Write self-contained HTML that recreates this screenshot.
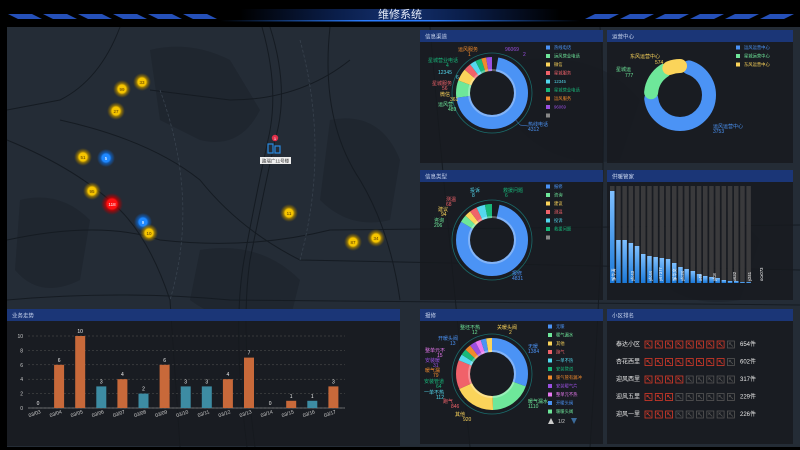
<!DOCTYPE html>
<html><head><meta charset="utf-8"><style>
html,body{margin:0;padding:0;background:#000;width:800px;height:450px;overflow:hidden}
svg text{font-family:"Liberation Sans","Noto Sans CJK SC",sans-serif}
</style></head><body>
<svg id="s" width="800" height="450" viewBox="0 0 800 450" xmlns="http://www.w3.org/2000/svg">
<defs>
<linearGradient id="tb" x1="0" x2="1"><stop offset="0" stop-color="#000"/><stop offset="0.3" stop-color="#0a1e4a"/><stop offset="0.5" stop-color="#14306e"/><stop offset="0.7" stop-color="#0a1e4a"/><stop offset="1" stop-color="#000"/></linearGradient>
<linearGradient id="tl" x1="0" x2="1"><stop offset="0" stop-color="#000"/><stop offset="0.4" stop-color="#2a7cff"/><stop offset="0.6" stop-color="#2a7cff"/><stop offset="1" stop-color="#000"/></linearGradient>
<linearGradient id="bb" x1="0" y1="0" x2="0" y2="1"><stop offset="0" stop-color="#7fc0ff"/><stop offset="1" stop-color="#1a78d8"/></linearGradient>
<radialGradient id="gy"><stop offset="0.45" stop-color="#f5c400"/><stop offset="0.6" stop-color="#b08a00" stop-opacity="0.8"/><stop offset="1" stop-color="#806000" stop-opacity="0"/></radialGradient>
<radialGradient id="gb"><stop offset="0.45" stop-color="#1e88ff"/><stop offset="0.6" stop-color="#1060c0" stop-opacity="0.8"/><stop offset="1" stop-color="#1060c0" stop-opacity="0"/></radialGradient>
<radialGradient id="gr"><stop offset="0.45" stop-color="#ff1010"/><stop offset="0.6" stop-color="#c00000" stop-opacity="0.8"/><stop offset="1" stop-color="#a00000" stop-opacity="0"/></radialGradient>
</defs>
<rect width="800" height="450" fill="#000"/>
<rect x="7" y="27" width="793" height="420" fill="#242c36"/>
<g fill="#1f262f" opacity="0.9">
<path d="M150 50 Q190 40 230 60 L260 110 Q240 150 200 140 L160 120Z"/>
<path d="M20 200 Q60 190 90 220 L80 280 Q40 300 15 270Z"/>
<path d="M330 120 Q380 110 400 160 L390 220 Q350 230 320 200Z"/>
<path d="M200 250 Q260 240 300 280 L290 320 Q230 330 190 300Z"/>
<path d="M520 60 Q600 50 640 100 L620 160 Q560 170 520 130Z"/>
<path d="M650 200 Q720 190 760 240 L740 300 Q680 310 650 270Z"/>
</g>
<g fill="none" stroke="#151b22" stroke-width="1">
<path d="M270 27 Q290 90 275 140 Q262 200 250 260 Q240 330 255 447"/>
<path d="M262 27 Q280 90 268 140 Q255 200 244 260 Q232 330 247 447"/>
<path d="M7 240 Q100 220 160 240 Q250 250 330 230 L800 225"/>
<path d="M60 120 Q150 140 200 180 Q240 230 300 260 L800 270"/>
<path d="M7 140 Q80 170 120 210 Q150 240 170 300 L180 447"/>
<path d="M330 27 Q320 120 360 180 Q390 230 400 300"/>
<path d="M7 300 Q120 290 230 300 L800 305"/>
<path d="M120 27 Q100 80 60 100 L7 110"/>
<path d="M350 60 Q300 100 230 100 L150 90"/>
<path d="M600 27 Q610 150 590 447"/>
<path d="M430 27 Q440 150 470 447"/>
</g>
<g fill="none" stroke="#38424e" stroke-width="0.8" stroke-dasharray="3 2">
<path d="M160 90 Q200 200 170 300"/><path d="M300 40 Q330 150 300 260"/>
</g>
<rect x="0" y="0" width="800" height="26" fill="#000"/>
<rect x="240" y="9" width="320" height="12" fill="url(#tb)"/>
<rect x="220" y="20" width="360" height="1.5" fill="url(#tl)"/>
<g fill="#2550b8" id="stripes"></g>
<text x="400" y="18" fill="#e8eefa" font-size="11" text-anchor="middle">维修系统</text>
<g id="dyn"></g>
</svg>
<script>
const NS="http://www.w3.org/2000/svg";
const S=document.getElementById('dyn');
function el(t,a,txt,par){const e=document.createElementNS(NS,t);for(const k in a)e.setAttribute(k,a[k]);if(txt!=null)e.textContent=txt;(par||S).appendChild(e);return e;}
function tx(x,y,s,c,fs,anc){return el('text',{x:x,y:y,fill:c,'font-size':fs||5,'text-anchor':anc||'start'},s);}
const st=document.getElementById('stripes');
for(let i=0;i<6;i++){let x=8+i*35;el('polygon',{points:`${x},14 ${x+24},14 ${x+34},19 ${x+10},19`},null,st);}
for(let i=0;i<6;i++){let x=585+i*35;el('polygon',{points:`${x+10},14 ${x+34},14 ${x+24},19 ${x},19`},null,st);}
function panel(x,y,w,h,title){el('rect',{x:x,y:y,width:w,height:h,fill:'#16191e','fill-opacity':0.8});el('rect',{x:x,y:y,width:w,height:12,fill:'#1b3677'});tx(x+5,y+8.5,title,'#c8d4ee',5.5);}
panel(420,30,183,133,'信息渠道');panel(607,30,186,133,'运营中心');
panel(420,170,183,130,'信息类型');panel(607,170,186,130,'供暖管家');
panel(420,309,183,135,'报修');panel(607,309,186,135,'小区排名');
panel(7,309,393,137,'业务走势');
function donut(cx,cy,r,w,segs,gap){const C=2*Math.PI*r;for(const [a1,a2,c] of segs){const L=(a2-a1-(gap||0))/360*C;el('circle',{cx:cx,cy:cy,r:r,fill:'none',stroke:c,'stroke-width':w,'stroke-dasharray':`${L} ${C}`,'stroke-dashoffset':-a1/360*C,transform:`rotate(-90 ${cx} ${cy})`,'stroke-linecap':gap?'round':'butt'});}}
const B='#4b93f5',G='#6ee79a',Y='#fbd45a',R='#f0626a',CY='#54d8ee',T='#18b87a',O='#f08a2c',P='#9a4fe0',PK='#e878f0';
el('circle',{cx:492,cy:93,r:40,fill:'none',stroke:'#1a6a6a','stroke-width':0.8});
donut(492,93,29,14,[[10,262,B],[262,290,G],[290,310,Y],[310,322,R],[322,332,CY],[332,342,T],[342,350,O],[350,360,P]]);
el('circle',{cx:492,cy:93,r:23,fill:'none',stroke:'#fff','stroke-opacity':0.3,'stroke-width':2});
const l1=[[458,51,'运风服务','1',O],[505,51,'96069','2',P],[428,62,'星城营业电话','4',T],[438,74,'12345','6',CY],[432,85,'星城服务','56',R],[440,96,'微信','361',Y],[438,106,'运风营','489',G]];
for(const [x,y,a,b,c] of l1){tx(x,y,a,c,5);tx(x+ (a.length>4?18:10),y+5,b,c,5);}
tx(528,126,'热线电话',B,5);tx(528,131,'4312',B,5);
el('path',{d:'M514 118 L520 125 L528 126',stroke:B,fill:'none','stroke-width':0.5});
function legend(x,y,items){items.forEach((it,i)=>{el('rect',{x:x,y:y+i*8.5-3.5,width:4,height:4,fill:it[1]});tx(x+8,y+i*8.5,it[0],it[1],4.3);});}
legend(546,49,[['热线电话',B],['运风营业电话',G],['微信',Y],['星城服务',R],['12345',CY],['星城营业电话',T],['运风服务',O],['96069',P],['',"#888"]]);
donut(680,95,29,14,[[18,268,B,],[275,332,G],[338,12,Y]].map(s=>s[1]<s[0]?[s[0],s[1]+360,s[2]]:s),6);
tx(630,58,'东风运营中心',Y,5);tx(655,64,'574',Y,5);
tx(616,71,'星城运',G,5);tx(625,77,'777',G,5);
tx(713,128,'运风运营中心',B,5);tx(713,133,'3753',B,5);
legend(736,49,[['运风运营中心',B],['星城运营中心',G],['东风运营中心',Y]]);
el('circle',{cx:492,cy:240,r:40,fill:'none',stroke:'#1a6a6a','stroke-width':0.8});
donut(492,240,29,14,[[12,300,B],[300,312,G],[312,322,Y],[322,334,R],[334,348,CY],[348,360,T]]);
el('circle',{cx:492,cy:240,r:23,fill:'none',stroke:'#fff','stroke-opacity':0.3,'stroke-width':2});
tx(470,192,'投诉',CY,5);tx(472,197,'8',CY,5);tx(503,192,'救援问题',T,5);tx(505,197,'6',T,5);
tx(446,201,'测温',R,5);tx(446,206,'68',R,5);tx(438,211,'建议',Y,5);tx(441,216,'94',Y,5);
tx(434,222,'咨询',G,5);tx(434,227,'206',G,5);tx(512,275,'报修',B,5);tx(512,280,'4831',B,5);
legend(546,188,[['报修',B],['咨询',G],['建议',Y],['测温',R],['投诉',CY],['救援问题',T],['',"#888"]]);
el('circle',{cx:492,cy:374,r:40,fill:'none',stroke:'#1a6a6a','stroke-width':0.8});
donut(492,374,29,14,[[0,110,B],[110,178,G],[178,245,Y],[245,292,R],[292,302,CY],[302,312,T],[312,322,O],[322,332,P],[332,341,PK],[341,350,B],[350,360,Y]]);
el('circle',{cx:492,cy:374,r:23,fill:'none',stroke:'#fff','stroke-opacity':0.3,'stroke-width':2});
const l4=[[460,329,'整坯不热','12',G],[497,329,'关暖头阀','2',Y],[438,340,'开暖头阀','13',B],[425,352,'整单元不','15',PK],[425,362,'安装暖','31',P],[425,372,'暖气漏','79',O],[424,383,'安装管道','64',T],[424,394,'一单不热','112',CY],[443,403,'跑气','846',R],[455,416,'其他','920',Y]];
for(const [x,y,a,b,c] of l4){tx(x,y,a,c,5);tx(x+(a.length>3?12:8),y+5,b,c,5);}
tx(528,348,'无暖',B,5);tx(528,353,'1384',B,5);tx(528,403,'暖气漏水',G,5);tx(528,408,'1110',G,5);
legend(548,328,[['无暖',B],['暖气漏水',G],['其他',Y],['跑气',R],['一单不热',CY],['安装管道',T],['暖气管有漏冲',O],['安装暖气片',P],['整单元不热',PK],['开暖头阀',B],['暖暖头阀',G]]);
el('polygon',{points:'548,424 551,418 554,424',fill:'#ccc'});tx(558,423,'1/2','#ccc',5);el('polygon',{points:'571,418 577,418 574,424',fill:'#3a6a9a'});
const hv=[92,43,43,40,37,29,27,26,25,24,20,16,14,12,9,7,6,5,3,2,2,1,1];
for(let i=0;i<hv.length;i++){const x=610+i*6.2;el('rect',{x:x,y:186,width:4.5,height:97,fill:'#3a3a3c'});const h=hv[i];el('rect',{x:x,y:283-h,width:4.5,height:h,fill:'url(#bb)'});}
const hl=[[611,'邹华涛'],[630,'yfc43'],[648,'yfc44'],[658,'y67377'],[672,'邹华文'],[680,'yfc24'],[698,'x45'],[712,'yfc8'],[732,'x632'],[747,'y241'],[759,'ocx073']];
for(const [x,s] of hl){const t=tx(x+4,281,s,'#fff',4.2);t.setAttribute('transform',`rotate(-90 ${x+4} 281)`);}
const rk=[['泰达小区',9,'654件'],['杏花西里',9,'602件'],['迎风西里',4,'317件'],['迎风五里',3,'229件'],['迎风一里',3,'226件']];
rk.forEach((r,i)=>{const y=344+i*17.5;tx(616,y+2,r[0],'#e8e8e8',6);for(let j=0;j<9;j++){const x=645+j*10.3,on=j<r[1]-(i<2?1:0);const c=on?'#d83a2a':'#555';el('rect',{x:x,y:y-3,width:7,height:7,fill:'none',stroke:c,'stroke-width':0.8});el('path',{d:`M${x+1.5} ${y-1.5} L${x+5.5} ${y+2.5} M${x+1.5} ${y+0.5} L${x+3.5} ${y-1.5}`,stroke:c,'stroke-width':0.8});}tx(740,y+2,r[2],'#e8e8e8',6);});
for(let v=0;v<=10;v+=2){const y=408-v*7.2;el('line',{x1:28,y1:y,x2:345,y2:y,stroke:'#555','stroke-dasharray':'2 2','stroke-width':0.5});tx(23,y+2,v,'#ccc',5,'end');}
el('line',{x1:28,y1:408,x2:345,y2:408,stroke:'#aaa','stroke-width':0.6});
const bv=[0,6,10,3,4,2,6,3,3,4,7,0,1,1,3],bc='OOOTOTOTTOOOOTO';
bv.forEach((v,i)=>{const x=38+i*21.1;const c=bc[i]=='O'?'#c8693a':'#3d8ca3';if(v)el('rect',{x:x-5,y:408-v*7.2,width:10,height:v*7.2,fill:c});tx(x,408-v*7.2-3,v,'#eee',5,'middle');const t=tx(x+3,413,'03/'+String(3+i).padStart(2,'0'),'#ccc',5,'end');t.setAttribute('transform',`rotate(-20 ${x+3} 413)`);});
const mk=[[122,89,'99','y'],[142,82,'33','y'],[116,111,'27','y'],[83,157,'51','y'],[106,158,'5','b'],[92,191,'95','y'],[112,204,'118','r'],[143,222,'9','b'],[149,233,'10','y'],[289,213,'11','y'],[353,242,'87','y'],[376,238,'34','y']];
for(const [x,y,s,c] of mk){el('circle',{cx:x,cy:y,r:c=='r'?11:9,fill:`url(#g${c})`});tx(x,y+1.8,s,c=='y'?'#5a3a00':'#fff',4.5,'middle');}
el('circle',{cx:275,cy:138,r:3.2,fill:'#e0304a'});tx(275,139.8,'1','#fff',4,'middle');
el('rect',{x:268,y:144,width:5,height:9,fill:'none',stroke:'#2a8ae0','stroke-width':1.2});el('rect',{x:275,y:146,width:5,height:7,fill:'none',stroke:'#2a8ae0','stroke-width':1.2});
el('rect',{x:260,y:157,width:31,height:7,fill:'#eee'});tx(275.5,162.5,'路瑞广11号楼','#333',4.5,'middle');
</script>
</body></html>
